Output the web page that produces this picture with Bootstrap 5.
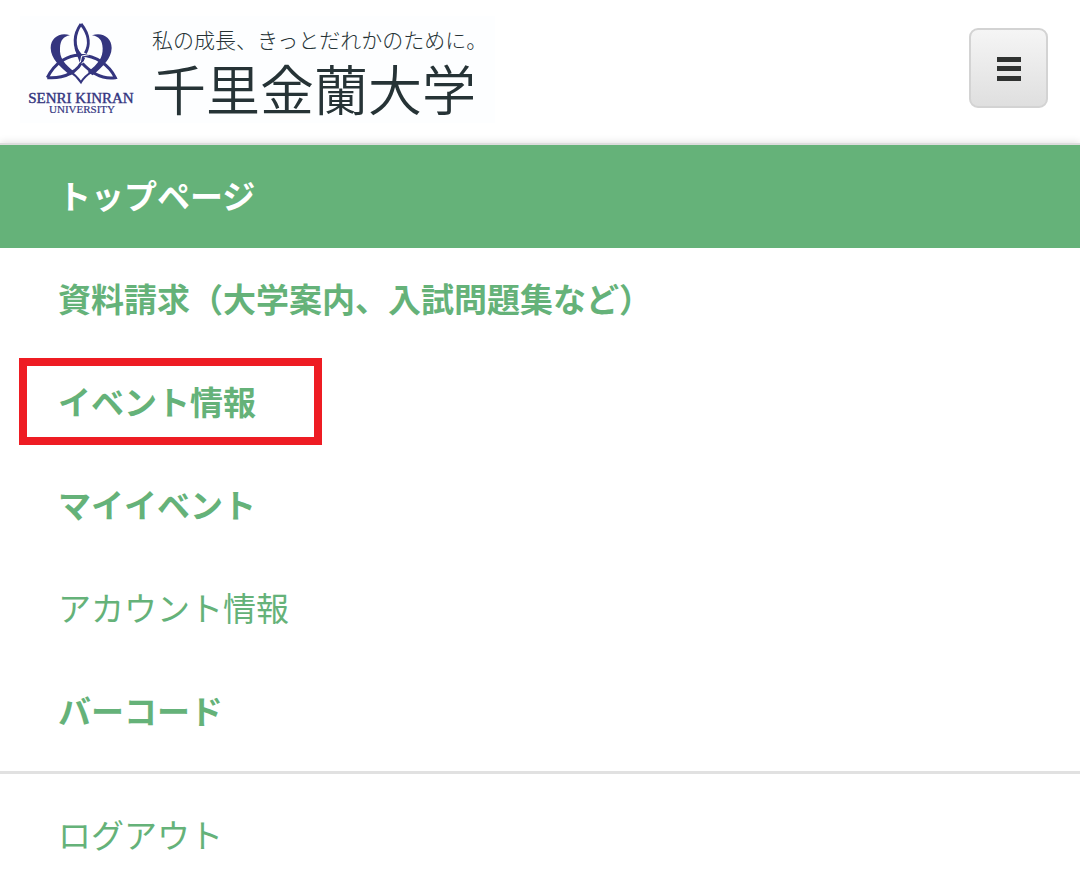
<!DOCTYPE html>
<html lang="ja">
<head>
<meta charset="utf-8">
<meta name="viewport" content="width=device-width, initial-scale=1">
<title>千里金蘭大学</title>
<link rel="stylesheet" href="https://cdn.jsdelivr.net/npm/bootstrap@5.3.0/dist/css/bootstrap.min.css">
<style>
  :root { --leaf: #65b279; --navy: #34357f; --ink: #263336; }
  body { font-family: "Noto Sans CJK JP", sans-serif; background: #fff; }
  .site-head { padding: 16px 32px 20px 20px; }
  .brand { color: var(--ink); background: #fdfeff; }
  .brand:hover { color: var(--ink); }
  .crest { width: 124px; height: 107px; }
  .crest text { font-family: "Liberation Serif", serif; fill: var(--navy); stroke: var(--navy); }
  .brand-words { padding: 8px 8px 0 8px; }
  .tagline { font-size: 21px; line-height: 30px; font-weight: 300; }
  .uni-name { font-size: 54px; line-height: 68px; font-weight: 350; }
  .menu-btn { width: 79px; height: 80px; margin-top: 12px; padding: 2px 0 0; border: 2px solid #d3d3d3; border-radius: 9px; background: linear-gradient(#f5f5f5, #dfdfdf); }
  .menu-panel { border-top: 2px solid #ddd; box-shadow: 0 0 8px rgba(0, 0, 0, .15); }
  .menu-link { padding: 25px 58px 27px; font-size: 33px; line-height: 51px; color: var(--leaf); }
  .menu-link:hover { color: var(--leaf); }
  .menu-link.active { background: var(--leaf); color: #fff; }
  .marked::after { content: ""; position: absolute; left: 19px; top: 7px; width: 303px; height: 87px; border: 8px solid #ee1c23; pointer-events: none; }
  .split { border-top: 3px solid #e1e1e1; margin-top: 8px; padding-top: 10px; }
</style>
</head>
<body>
<header class="site-head d-flex justify-content-between align-items-start">
  <a href="#" class="brand d-flex text-decoration-none">
    <svg class="crest" viewBox="20 16 124 107" role="img" aria-label="Senri Kinran University">
      <g transform="translate(40 18) scale(.3333)">
        <g fill="none" stroke="#34357f" stroke-width="9">
          <path d="M123 18C99 52 102 87 121 118"/>
          <path d="M123 18C151 53 148 85 136 106"/>
          <path d="M22 179C45 132 88 109 124 112C166 113 207 140 226 179C184 185 148 160 124 133"/>
          <path d="M22 179C70 183 118 163 131 118"/>
          <path d="M89 160C102 168 113 178 123 193C132 177 144 168 158 160" stroke-width="6"/>
        </g>
        <path fill="#34357f" d="M90 52C61 41 32 59 32 90C33 123 58 144 91 172L105 163C72 138 58 119 60 91C61 66 70 56 90 52ZM156 52C187 41 215 59 215 90C214 123 189 144 158 172L143 162C175 138 189 119 188 91C187 66 178 56 156 52Z"/>
        <path fill="#34357f" d="M104 92L119 133L133 120L110 88Z"/>
        <path fill="none" stroke="#fdfeff" stroke-width="3" d="M121 133L125 114L147 110M125 136L137 128"/>
      </g>
      <text x="81" y="103" text-anchor="middle" font-size="15" stroke-width=".4">SENRI KINRAN</text>
      <text x="82" y="113" text-anchor="middle" font-size="11" stroke-width=".2">UNIVERSITY</text>
    </svg>
    <span class="brand-words d-flex flex-column">
      <span class="tagline">私の成長、きっとだれかのために。</span>
      <span class="uni-name">千里金蘭大学</span>
    </span>
  </a>
  <button type="button" class="menu-btn d-flex align-items-center justify-content-center" aria-label="メニュー" aria-controls="menu" aria-expanded="true">
    <svg width="24" height="24" viewBox="0 0 24 24" fill="#303231" aria-hidden="true"><path d="M0 0h24v5H0zM0 9h24v5H0zM0 19h24v5H0z"/></svg>
  </button>
</header>
<nav id="menu" class="menu-panel" aria-label="メインメニュー">
  <ul class="list-unstyled m-0">
    <li><a href="#" class="menu-link active d-block text-decoration-none fw-bold" aria-current="page">トップページ</a></li>
    <li><a href="#" class="menu-link d-block text-decoration-none fw-bold">資料請求（大学案内、入試問題集など）</a></li>
    <li class="marked position-relative"><a href="#" class="menu-link d-block text-decoration-none fw-bold">イベント情報</a></li>
    <li><a href="#" class="menu-link d-block text-decoration-none fw-bold">マイイベント</a></li>
    <li><a href="#" class="menu-link d-block text-decoration-none">アカウント情報</a></li>
    <li><a href="#" class="menu-link d-block text-decoration-none fw-bold">バーコード</a></li>
    <li class="split"><a href="#" class="menu-link d-block text-decoration-none pb-0">ログアウト</a></li>
  </ul>
</nav>
<script src="https://cdn.jsdelivr.net/npm/bootstrap@5.3.0/dist/js/bootstrap.bundle.min.js"></script>
</body>
</html>
